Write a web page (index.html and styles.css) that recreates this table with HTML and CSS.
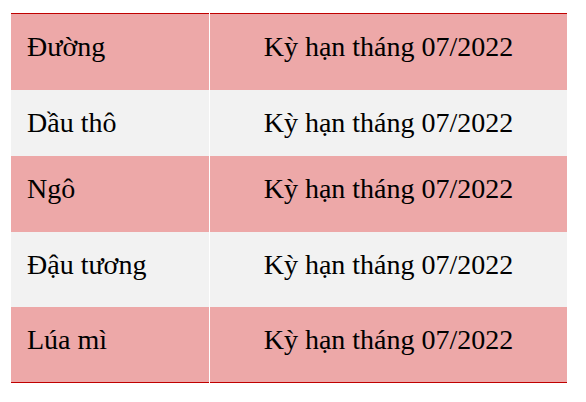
FILE: index.html
```html
<!DOCTYPE html>
<html lang="vi">
<head>
<meta charset="utf-8">
<link rel="stylesheet" href="styles.css">
</head>
<body>
<div class="page">
  <table class="terms">
    <tbody>
      <tr class="pink r1"><td class="name">Đường</td><td class="term">Kỳ hạn tháng 07/2022</td></tr>
      <tr class="grey r2"><td class="name">Dầu thô</td><td class="term">Kỳ hạn tháng 07/2022</td></tr>
      <tr class="pink r3"><td class="name">Ngô</td><td class="term">Kỳ hạn tháng 07/2022</td></tr>
      <tr class="grey r4"><td class="name">Đậu tương</td><td class="term">Kỳ hạn tháng 07/2022</td></tr>
      <tr class="pink r5"><td class="name">Lúa mì</td><td class="term">Kỳ hạn tháng 07/2022</td></tr>
    </tbody>
  </table>
</div>
</body>
</html>
```
FILE: styles.css
```css
html, body {
  margin: 0;
  padding: 0;
  background: #ffffff;
}
.page {
  padding: 13px 0 0 11px;
}
.terms {
  border-collapse: collapse;
  border-spacing: 0;
  width: 556px;
  border-top: 1px solid #c00000;
  border-bottom: 1px solid #c00000;
  font-family: "Liberation Serif", "Times New Roman", serif;
  font-size: 28px;
  color: #000000;
}
.terms td {
  padding: 17px 0 0 0;
  vertical-align: top;
  line-height: 32px;
}
.terms td.name {
  width: 182px;
  padding-left: 16px;
  text-align: left;
}
.terms td.term {
  border-left: 1px solid #ffffff;
  text-align: center;
}
.pink { background: #eda8a8; }
.grey { background: #f2f2f2; }
.r1 { height: 76px; }
.r2 { height: 66px; }
.r3 { height: 76px; }
.r4 { height: 75px; }
.r5 { height: 76px; }
```
